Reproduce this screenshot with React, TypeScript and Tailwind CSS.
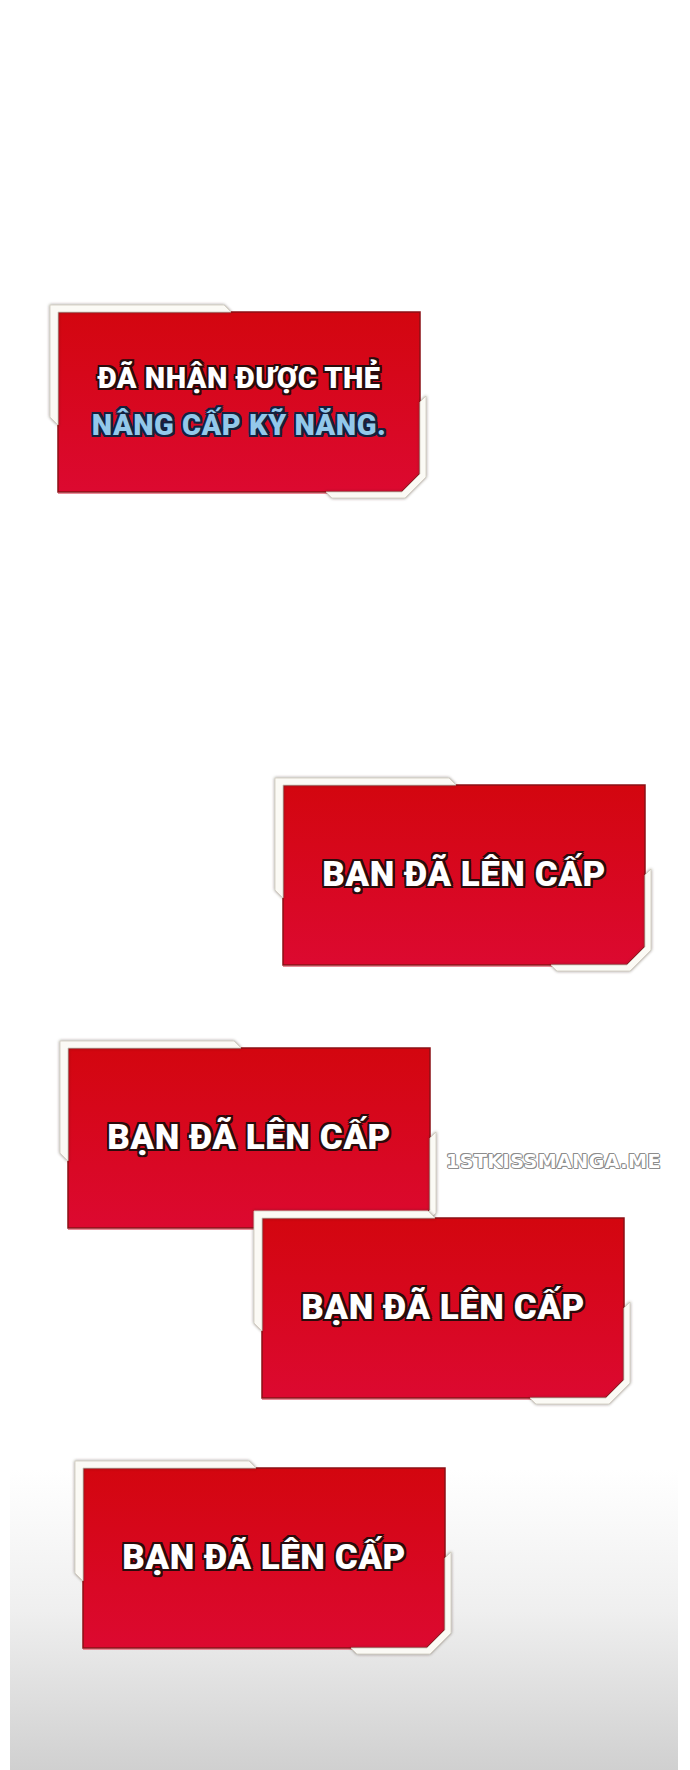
import React from "react";

type Line = { text: string; tone?: "white" | "blue" };

interface Notice {
  id: number;
  place: string;
  size: string;
  lines: Line[];
}

const notices: Notice[] = [
  {
    id: 1,
    place: "mt-[305px] ml-[40px]",
    size: "text-[29px] leading-[47px]",
    lines: [{ text: "ĐÃ NHẬN ĐƯỢC THẺ" }, { text: "NÂNG CẤP KỸ NĂNG.", tone: "blue" }],
  },
  {
    id: 2,
    place: "mt-[280px] ml-[265px]",
    size: "text-[35px] leading-[44px]",
    lines: [{ text: "BẠN ĐÃ LÊN CẤP" }],
  },
];

const whiteOutline =
  "[text-shadow:2px_0_0_#2a0b0b,-2px_0_0_#2a0b0b,0_2px_0_#2a0b0b,0_-2px_0_#2a0b0b,2px_2px_0_#2a0b0b,-2px_-2px_0_#2a0b0b,2px_-2px_0_#2a0b0b,-2px_2px_0_#2a0b0b]";
const blueOutline =
  "[text-shadow:2px_0_0_#14213d,-2px_0_0_#14213d,0_2px_0_#14213d,0_-2px_0_#14213d,2px_2px_0_#14213d,-2px_-2px_0_#14213d,2px_-2px_0_#14213d,-2px_2px_0_#14213d]";

// Red system window with the white bracket frame (outer box 376x193, red area 362x180 at 8,7)
function Frame({ uid }: { uid: string }) {
  return (
    <svg viewBox="0 0 376 193" width="376" height="193" className="col-start-1 row-start-1 overflow-visible">
      <defs>
        <linearGradient id={`red-${uid}`} x1="0" y1="0" x2="0" y2="1">
          <stop offset="0" stopColor="#d3060f" />
          <stop offset="1" stopColor="#dc0930" />
        </linearGradient>
        <filter id={`sh-${uid}`} x="-10%" y="-10%" width="120%" height="120%">
          <feDropShadow dx="0" dy="0" stdDeviation="1.6" floodColor="#3a3228" floodOpacity="0.6" />
        </filter>
      </defs>
      <polygon
        points="8,7 370,7 370,169 352,187 8,187"
        fill={`url(#red-${uid})`}
        stroke="#8a1016"
        strokeWidth="1.5"
      />
      <line x1="8" y1="188.5" x2="352" y2="188.5" stroke="#e98a98" strokeWidth="1.2" />
      <g filter={`url(#sh-${uid})`} fill="#fbfaf5" stroke="#cfc9bd" strokeWidth="0.8">
        <polygon points="0,0 174,0 181,7 8,7 8,120 0,112" />
        <polygon points="370,97 376,91 376,172 355,193 282,193 276,187 352,187 370,169" />
      </g>
    </svg>
  );
}

function NoticeBox({ notice, className = "" }: { notice: Omit<Notice, "place">; className?: string }) {
  return (
    <div className={`grid w-[376px] h-[193px] shrink-0 ${className}`}>
      <Frame uid={String(notice.id)} />
      <div
        className={`col-start-1 row-start-1 flex flex-col items-center justify-center pl-[8px] pt-[7px] pr-[6px] pb-[6px] font-['Roboto',sans-serif] font-black tracking-[0.5px] ${notice.size}`}
      >
        {notice.lines.map((line) => (
          <span
            key={line.text}
            className={line.tone === "blue" ? `text-[#93c8ea] ${blueOutline}` : `text-white ${whiteOutline}`}
          >
            {line.text}
          </span>
        ))}
      </div>
    </div>
  );
}

const levelUp = { size: "text-[35px] leading-[44px]", lines: [{ text: "BẠN ĐÃ LÊN CẤP" }] };

export default function App() {
  return (
    <div className="w-[690px] h-[1770px] bg-white overflow-hidden">
      <div className="ml-[10px] mr-[12px] h-full flex flex-col bg-[linear-gradient(to_bottom,#ffffff_0%,#ffffff_83%,#efefef_91%,#d0d0d0_100%)]">
        {notices.map((n) => (
          <NoticeBox key={n.id} notice={n} className={n.place} />
        ))}

        {/* stacked level-up popups */}
        <div className="flex items-start mt-[70px]">
          <NoticeBox notice={{ id: 3, ...levelUp }} className="ml-[50px]" />
          <span className="ml-[10px] mt-[108px] font-['DejaVu_Sans',sans-serif] font-bold text-[19px] leading-[24px] tracking-[0.5px] text-white [text-shadow:1px_0_0_#8c8c8c,-1px_0_0_#8c8c8c,0_1px_0_#8c8c8c,0_-1px_0_#8c8c8c,1px_1px_0_#8c8c8c,-1px_-1px_0_#8c8c8c]">
            1STKISSMANGA.ME
          </span>
        </div>
        <NoticeBox notice={{ id: 4, ...levelUp }} className="mt-[-23px] ml-[244px]" />
        <NoticeBox notice={{ id: 5, ...levelUp }} className="mt-[57px] ml-[65px]" />
      </div>
    </div>
  );
}
